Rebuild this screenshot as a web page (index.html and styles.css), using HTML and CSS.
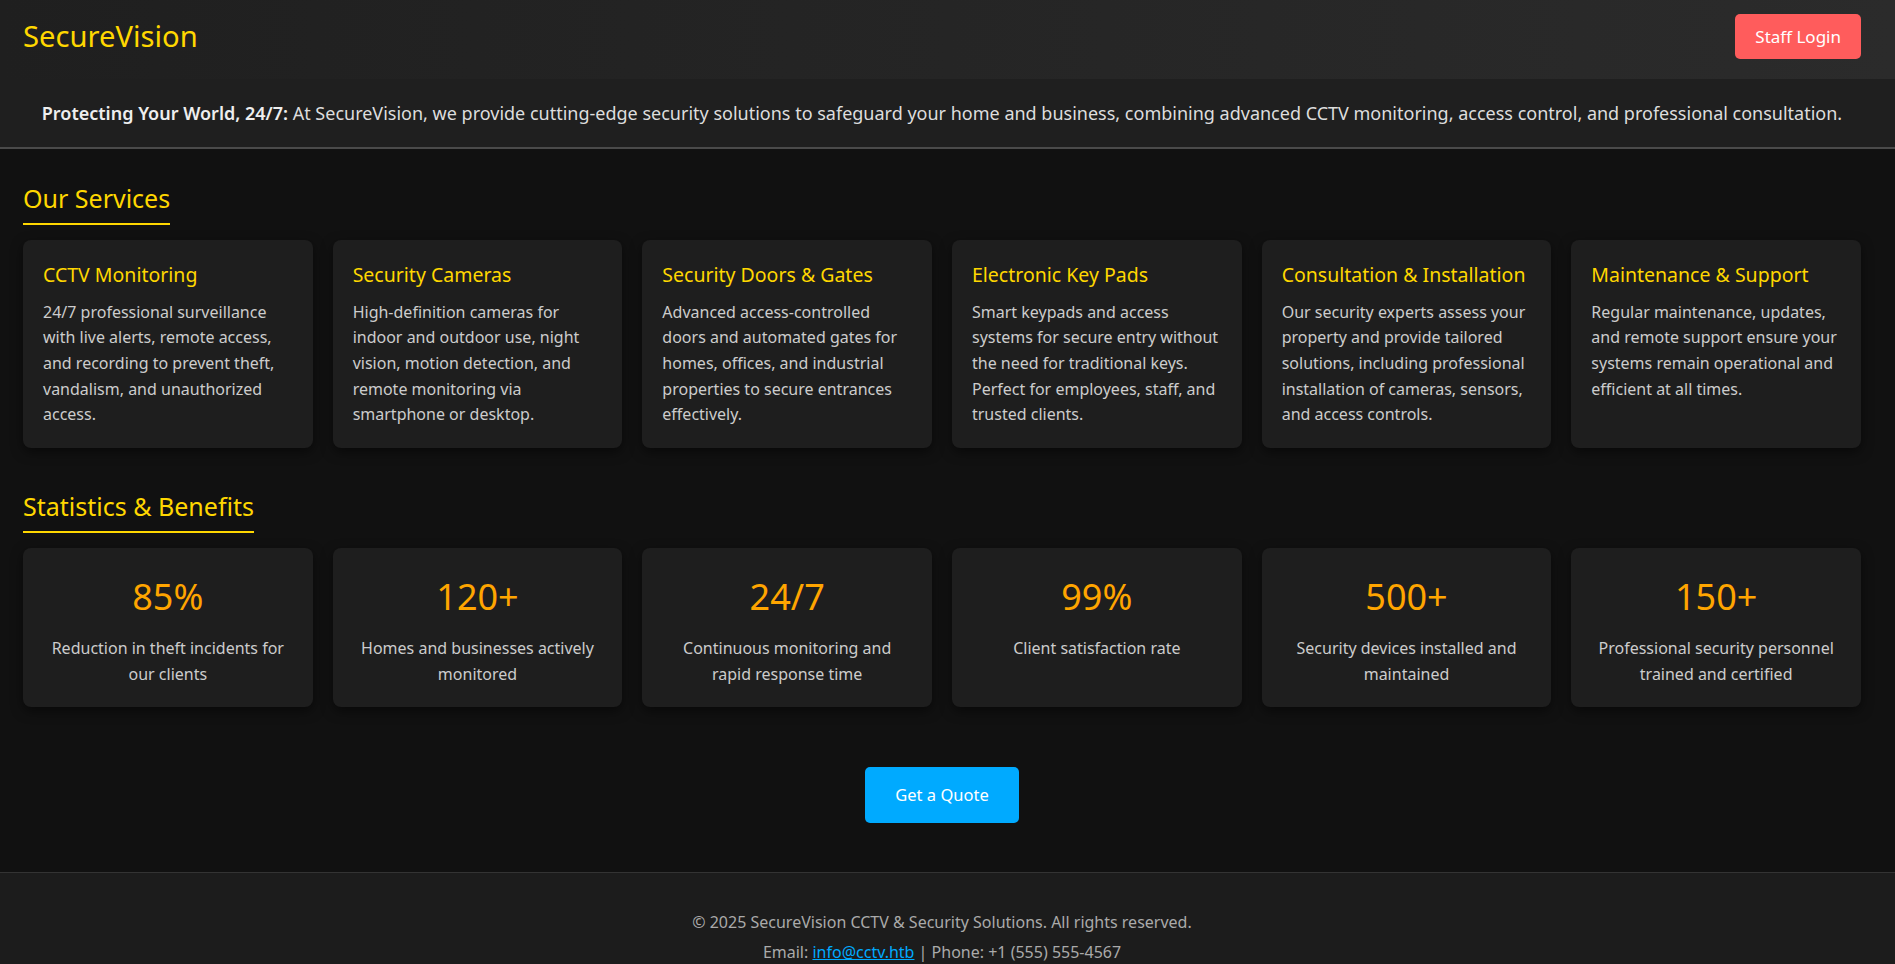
FILE: index.html
```html
<!DOCTYPE html>
<html lang="en">
<head>
  <meta charset="UTF-8" />
  <meta name="viewport" content="width=device-width, initial-scale=1.0" />
  <title>SecureVision - CCTV & Security Solutions</title>
  <link rel="stylesheet" href="styles.css">
</head>
<body>
  <header class="topbar">
    <div class="logo">SecureVision</div>
    <a class="login-btn" href="#">Staff Login</a>
  </header>

  <div class="banner">
    <strong>Protecting Your World, 24/7:</strong> At SecureVision, we provide cutting-edge security solutions to safeguard your home and business, combining advanced CCTV monitoring, access control, and professional consultation.
  </div>

  <main class="content">
    <section class="services">
      <h2>Our Services</h2>
      <div class="grid">
        <div class="card">
          <h3>CCTV Monitoring</h3>
          <p>24/7 professional surveillance with live alerts, remote access, and recording to prevent theft, vandalism, and unauthorized access.</p>
        </div>
        <div class="card">
          <h3>Security Cameras</h3>
          <p>High-definition cameras for indoor and outdoor use, night vision, motion detection, and remote monitoring via smartphone or desktop.</p>
        </div>
        <div class="card">
          <h3>Security Doors &amp; Gates</h3>
          <p>Advanced access-controlled doors and automated gates for homes, offices, and industrial properties to secure entrances effectively.</p>
        </div>
        <div class="card">
          <h3>Electronic Key Pads</h3>
          <p>Smart keypads and access systems for secure entry without the need for traditional keys. Perfect for employees, staff, and trusted clients.</p>
        </div>
        <div class="card">
          <h3>Consultation &amp; Installation</h3>
          <p>Our security experts assess your property and provide tailored solutions, including professional installation of cameras, sensors, and access controls.</p>
        </div>
        <div class="card">
          <h3>Maintenance &amp; Support</h3>
          <p>Regular maintenance, updates, and remote support ensure your systems remain operational and efficient at all times.</p>
        </div>
      </div>
    </section>

    <section class="stats">
      <h2>Statistics &amp; Benefits</h2>
      <div class="grid">
        <div class="card stat">
          <div class="number">85%</div>
          <p>Reduction in theft incidents for our clients</p>
        </div>
        <div class="card stat">
          <div class="number">120+</div>
          <p>Homes and businesses actively monitored</p>
        </div>
        <div class="card stat">
          <div class="number">24/7</div>
          <p>Continuous monitoring and rapid response time</p>
        </div>
        <div class="card stat">
          <div class="number">99%</div>
          <p>Client satisfaction rate</p>
        </div>
        <div class="card stat">
          <div class="number">500+</div>
          <p>Security devices installed and maintained</p>
        </div>
        <div class="card stat">
          <div class="number">150+</div>
          <p>Professional security personnel trained and certified</p>
        </div>
      </div>
    </section>

    <div class="cta">
      <a class="quote-btn" href="#">Get a Quote</a>
    </div>
  </main>

  <footer class="footer">
    <p>&copy; 2025 SecureVision CCTV &amp; Security Solutions. All rights reserved.</p>
    <p>Email: <a href="#">info@cctv.htb</a> | Phone: +1 (555) 555-4567</p>
  </footer>
</body>
</html>
```

FILE: styles.css
```css
body {
  font-family: "Noto Sans", "Open Sans", sans-serif;
  background: #111;
  color: #ccc;
  margin: 0;
  line-height: 1.6;
  font-size: 16px;
}
.topbar {
  height: 79px;
  box-sizing: border-box;
  padding: 0 34px 7px 23px;
  display: flex;
  align-items: center;
  justify-content: space-between;
  background: linear-gradient(90deg, #1f1f1f, #2b2b2b);
}
.logo {
  color: #ffd700;
  font-size: 29.2px;
  line-height: 1.6;
}
.login-btn {
  background: #ff5c5c;
  color: #fff;
  text-decoration: none;
  font-size: 17px;
  line-height: 27px;
  padding: 9px 20px;
  border-radius: 5px;
}
.banner {
  background: #1f1f1f;
  border-bottom: 2px solid #4a4a4a;
  padding: 20px 31px 19px 20px;
  text-align: center;
  font-size: 18px;
  color: #ddd;
}
.banner strong {
  color: #eee;
  font-weight: 600;
}
.content {
  padding: 29px 34px 0 23px;
}
h2 {
  display: inline-block;
  color: #ffd700;
  font-size: 25px;
  font-weight: normal;
  margin: 0 0 15px;
  padding-bottom: 5px;
  border-bottom: 2px solid #ffd700;
}
.services {
  margin-bottom: 38px;
}
.grid {
  display: grid;
  grid-template-columns: repeat(6, 1fr);
  gap: 20px;
}
.card {
  background: #1e1e1e;
  border-radius: 8px;
  padding: 20px;
  box-shadow: 0 4px 12px rgba(0, 0, 0, 0.5);
}
.card h3 {
  color: #ffd700;
  font-size: 19.5px;
  font-weight: normal;
  line-height: 30px;
  margin: 0 0 10px;
}
.card p {
  margin: 0;
  color: #ccc;
}
.stat {
  text-align: center;
  padding-bottom: 19px;
}
.number {
  color: #ffa500;
  font-size: 36px;
  margin-bottom: 11px;
}
.cta {
  text-align: center;
  padding: 60px 0 49px;
}
.quote-btn {
  display: inline-block;
  background: #00aaff;
  color: #fff;
  text-decoration: none;
  font-size: 16.5px;
  line-height: 28px;
  padding: 14px 30px;
  border-radius: 5px;
}
.footer {
  background: #1c1c1c;
  border-top: 1px solid #333;
  padding: 32px 31px 30px 20px;
  text-align: center;
  color: #aaa;
}
.footer p {
  margin: 5px 0;
}
.footer a {
  color: #00aaff;
}
```
